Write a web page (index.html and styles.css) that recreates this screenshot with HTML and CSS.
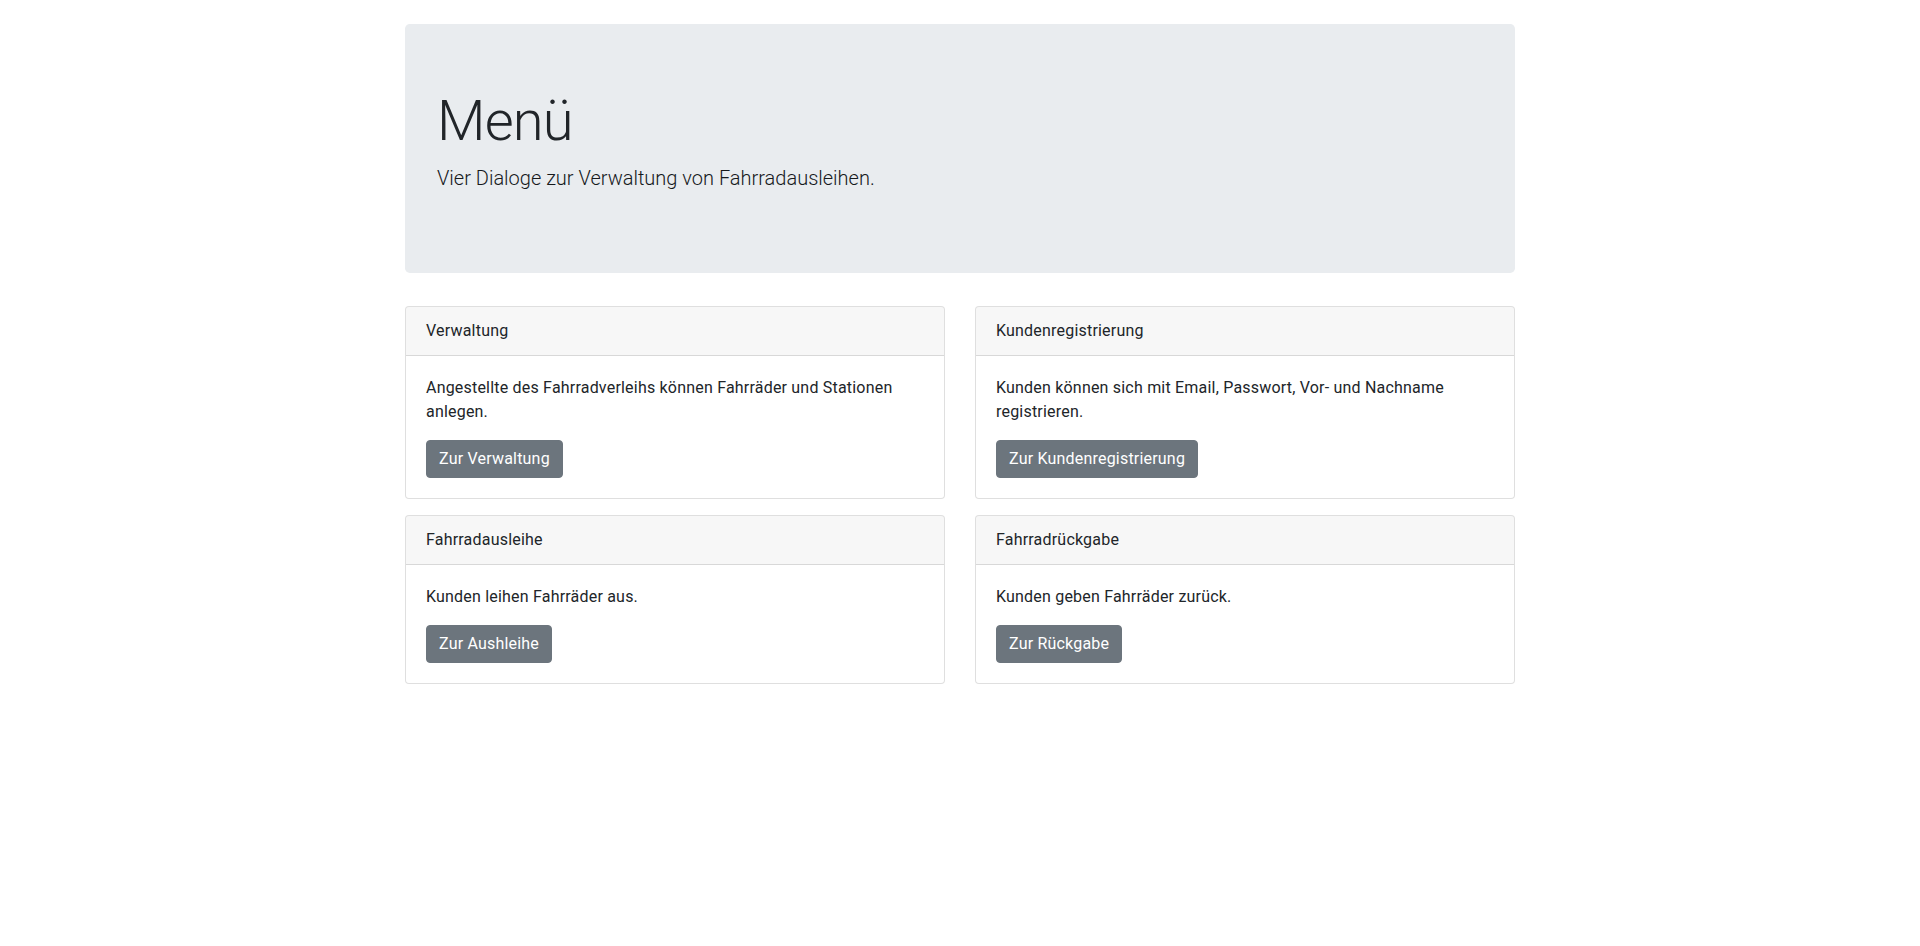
FILE: index.html
```html
<!DOCTYPE html>
<html lang="de">
<head>
<meta charset="utf-8">
<title>Menü</title>
<link rel="stylesheet" href="styles.css">
</head>
<body>
<div class="container">
  <div class="jumbotron">
    <h1 class="display">Menü</h1>
    <p class="lead">Vier Dialoge zur Verwaltung von Fahrradausleihen.</p>
  </div>
  <div class="grid">
    <div class="card">
      <div class="card-header">Verwaltung</div>
      <div class="card-body">
        <p class="card-text">Angestellte des Fahrradverleihs können Fahrräder und Stationen anlegen.</p>
        <a class="btn" href="#">Zur Verwaltung</a>
      </div>
    </div>
    <div class="card">
      <div class="card-header">Kundenregistrierung</div>
      <div class="card-body">
        <p class="card-text">Kunden können sich mit Email, Passwort, Vor- und Nachname registrieren.</p>
        <a class="btn" href="#">Zur Kundenregistrierung</a>
      </div>
    </div>
    <div class="card">
      <div class="card-header">Fahrradausleihe</div>
      <div class="card-body">
        <p class="card-text">Kunden leihen Fahrräder aus.</p>
        <a class="btn" href="#">Zur Aushleihe</a>
      </div>
    </div>
    <div class="card">
      <div class="card-header">Fahrradrückgabe</div>
      <div class="card-body">
        <p class="card-text">Kunden geben Fahrräder zurück.</p>
        <a class="btn" href="#">Zur Rückgabe</a>
      </div>
    </div>
  </div>
</div>
</body>
</html>
```
FILE: styles.css
```css
* { box-sizing: border-box; }
html, body { margin: 0; }
body {
  font-family: Roboto, "Liberation Sans", sans-serif;
  font-size: 16px;
  line-height: 1.5;
  letter-spacing: 0.2px;
  color: #212529;
  background: #fff;
}
.container {
  width: 1140px;
  margin: 0 auto;
  padding: 24px 15px 0;
}
.jumbotron {
  background: #e9ecef;
  border-radius: 4.8px;
  padding: 64px 32px;
  margin-bottom: 33px;
}
.display {
  font-size: 56px;
  font-weight: 300;
  line-height: 1.2;
  letter-spacing: -0.8px;
  margin: 0 0 8px;
}
.lead {
  font-size: 20px;
  font-weight: 300;
  line-height: 1.5;
  letter-spacing: 0;
  color: #16191c;
  margin: 0 0 16px;
}
.grid {
  display: grid;
  grid-template-columns: 1fr 1fr;
  column-gap: 30px;
  row-gap: 16px;
}
.card {
  border: 1px solid rgba(0,0,0,.125);
  border-radius: 4px;
  background: #fff;
  display: flex;
  flex-direction: column;
  align-self: start;
}
.card-header {
  padding: 12px 20px;
  background: rgba(0,0,0,.03);
  border-bottom: 1px solid rgba(0,0,0,.125);
  border-radius: 3px 3px 0 0;
}
.card-body { padding: 20px; }
.card-text { margin: 0 0 16px; }
.btn {
  display: inline-block;
  padding: 6px 12px;
  font-size: 16px;
  line-height: 1.5;
  color: #fff;
  background: #6c757d;
  border: 1px solid #6c757d;
  border-radius: 4px;
  text-decoration: none;
}
```
